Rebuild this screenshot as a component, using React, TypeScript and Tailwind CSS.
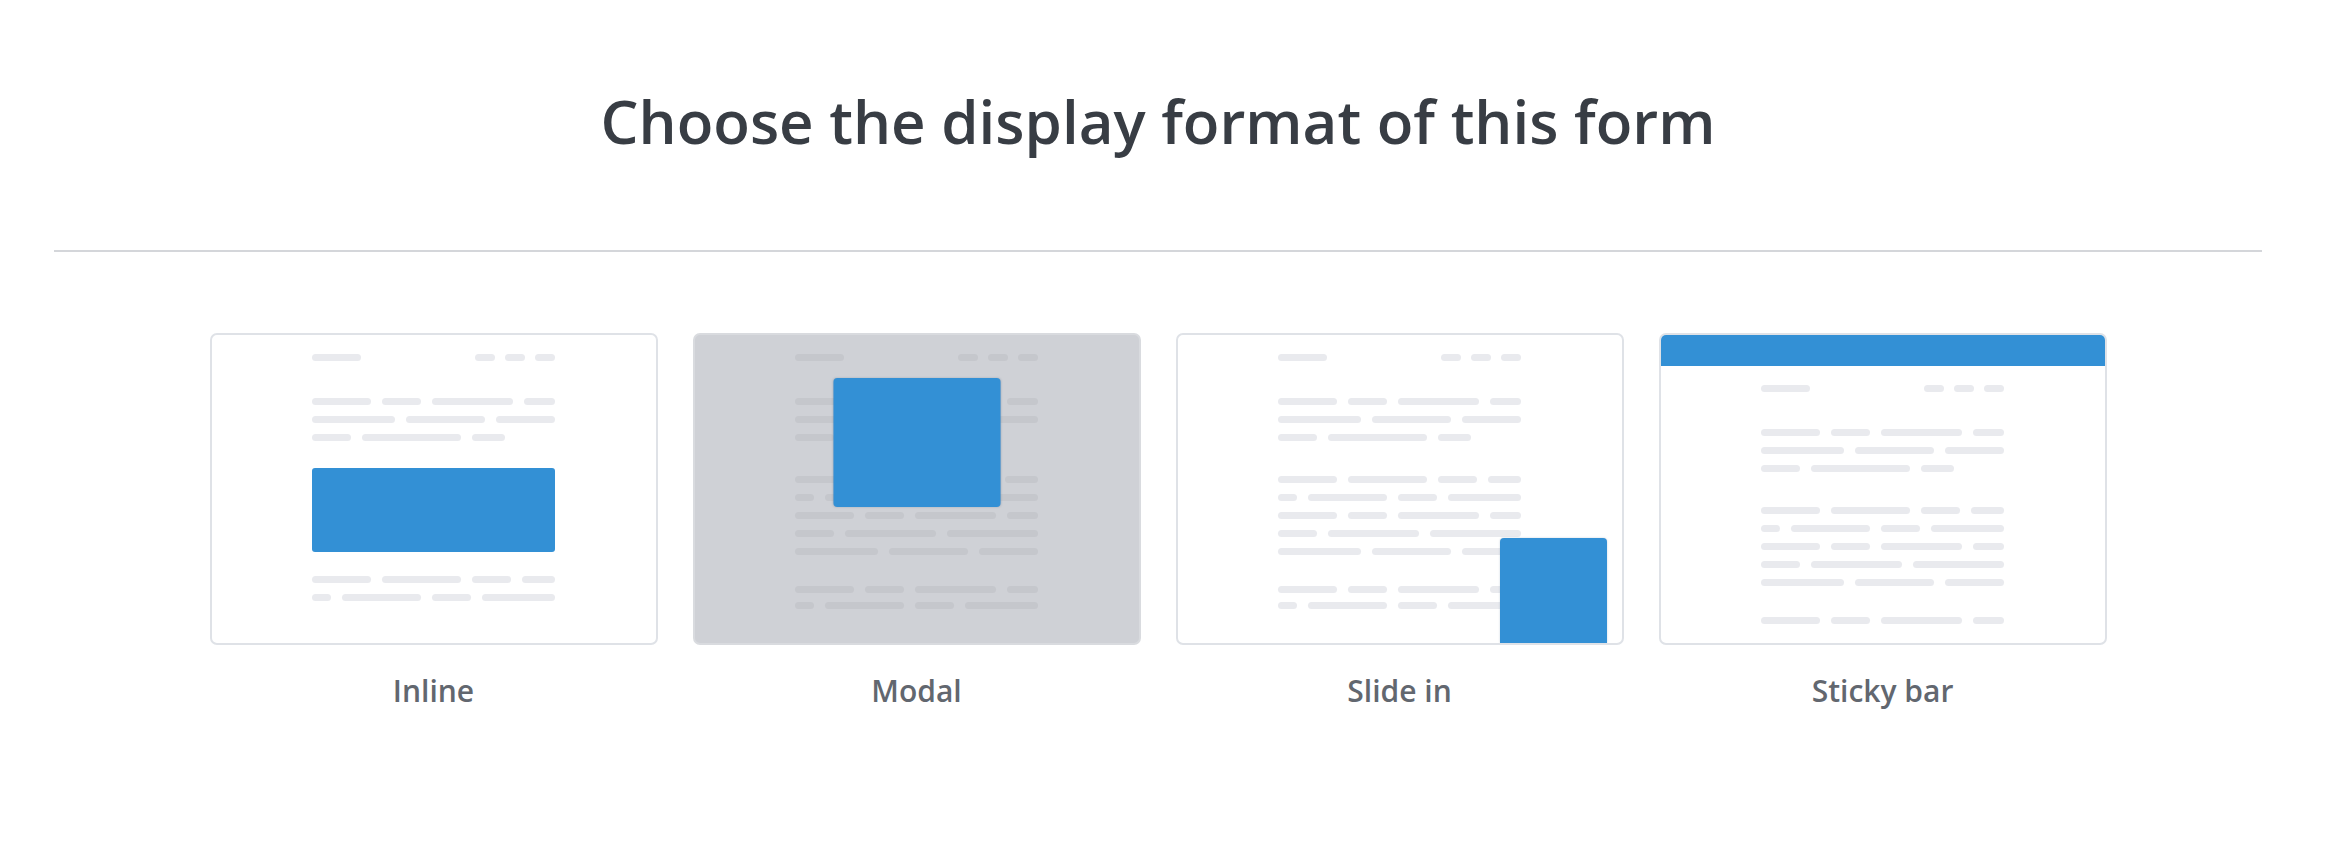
import React from 'react'

type Row = number[]

const blockOne: Row[] = [
  [59, 39, 81, 31],
  [83, 79, 59],
  [39, 99, 33],
]

const blockTwo: Row[] = [
  [59, 79, 39, 33],
  [19, 79, 39, 73],
  [59, 39, 81, 31],
  [39, 91, 91],
  [83, 79, 59],
]

const blockThree: Row[] = [
  [59, 39, 81, 31],
  [19, 79, 39, 73],
]

function Lines({ rows, pill, gap = 'gap-[11px]' }: { rows: Row[]; pill: string; gap?: string }) {
  return (
    <div className={`flex flex-col ${gap}`}>
      {rows.map((row, i) => (
        <div key={i} className="flex gap-[11px] h-[7px]">
          {row.map((w, j) => (
            <span key={j} className={`block h-[7px] rounded-full ${pill}`} style={{ width: w }} />
          ))}
        </div>
      ))}
    </div>
  )
}

function Header({ pill }: { pill: string }) {
  return (
    <div className="flex justify-between h-[7px]">
      <span className={`block w-[49px] h-[7px] rounded-full ${pill}`} />
      <div className="flex gap-[10px]">
        <span className={`block w-[20px] h-[7px] rounded-full ${pill}`} />
        <span className={`block w-[20px] h-[7px] rounded-full ${pill}`} />
        <span className={`block w-[20px] h-[7px] rounded-full ${pill}`} />
      </div>
    </div>
  )
}

function Page({ pill, lastRows = blockThree }: { pill: string; lastRows?: Row[] }) {
  return (
    <div className="w-[243px] mx-auto pt-[19px]">
      <Header pill={pill} />
      <div className="mt-[37px]">
        <Lines rows={blockOne} pill={pill} />
      </div>
      <div className="mt-[35px]">
        <Lines rows={blockTwo} pill={pill} />
      </div>
      <div className="mt-[31px]">
        <Lines rows={lastRows} pill={pill} gap="gap-[9px]" />
      </div>
    </div>
  )
}

const light = 'bg-[#e9eaee]'

function InlinePreview() {
  return (
    <div className="w-[243px] mx-auto pt-[19px]">
      <Header pill={light} />
      <div className="mt-[37px]">
        <Lines rows={blockOne} pill={light} />
      </div>
      <div className="mt-[27px] h-[84px] rounded-[3px] bg-[#3390d5]" />
      <div className="mt-[24px]">
        <Lines rows={blockTwo.slice(0, 2)} pill={light} />
      </div>
    </div>
  )
}

function ModalPreview() {
  return (
    <>
      <Page pill="bg-[#c5c7cc]" />
      <div className="absolute top-[43px] left-1/2 -translate-x-1/2 w-[167px] h-[129px] rounded-[4px] bg-[#3390d5] shadow-[0_0_2px_rgba(60,90,130,0.35)]" />
    </>
  )
}

function SlideInPreview() {
  return (
    <>
      <Page pill={light} />
      <div className="absolute bottom-0 right-[15px] w-[107px] h-[105px] rounded-t-[4px] bg-[#3390d5] shadow-[0_0_2px_rgba(60,90,130,0.3)]" />
    </>
  )
}

function StickyPreview() {
  return (
    <>
      <div className="h-[31px] bg-[#3390d5]" />
      <Page pill={light} lastRows={blockThree.slice(0, 1)} />
    </>
  )
}

const formats = [
  { label: 'Inline', bg: 'bg-white', border: 'border-[#dfe2e7]', preview: <InlinePreview /> },
  { label: 'Modal', bg: 'bg-[#cfd1d6]', border: 'border-[#d9dbdf]', preview: <ModalPreview /> },
  { label: 'Slide in', bg: 'bg-white', border: 'border-[#dfe2e7]', preview: <SlideInPreview /> },
  { label: 'Sticky bar', bg: 'bg-white', border: 'border-[#dfe2e7]', preview: <StickyPreview /> },
]

export default function App() {
  return (
    <div
      className="min-h-[846px] bg-white pl-[54px] pr-[64px]"
      style={{ fontFamily: '"Open Sans", "Noto Sans", sans-serif' }}
    >
      <h1 className="pt-[81px] text-center text-[60px] leading-[80px] font-semibold text-[#383d44]">
        Choose the display format of this form
      </h1>

      <div className="mt-[89px] h-[2px] bg-[#d4d6da]" />

      <div className="mt-[81px] flex justify-center gap-[35px]">
        {formats.map((f) => (
          <div key={f.label} className="flex flex-col items-center w-[448px]">
            <div className={`relative w-full h-[312px] overflow-hidden rounded-[7px] border-2 ${f.border} ${f.bg}`}>
              {f.preview}
            </div>
            <p className="mt-[26px] text-[30px] leading-[40px] font-semibold text-[#62676f]">
              {f.label}
            </p>
          </div>
        ))}
      </div>
    </div>
  )
}
